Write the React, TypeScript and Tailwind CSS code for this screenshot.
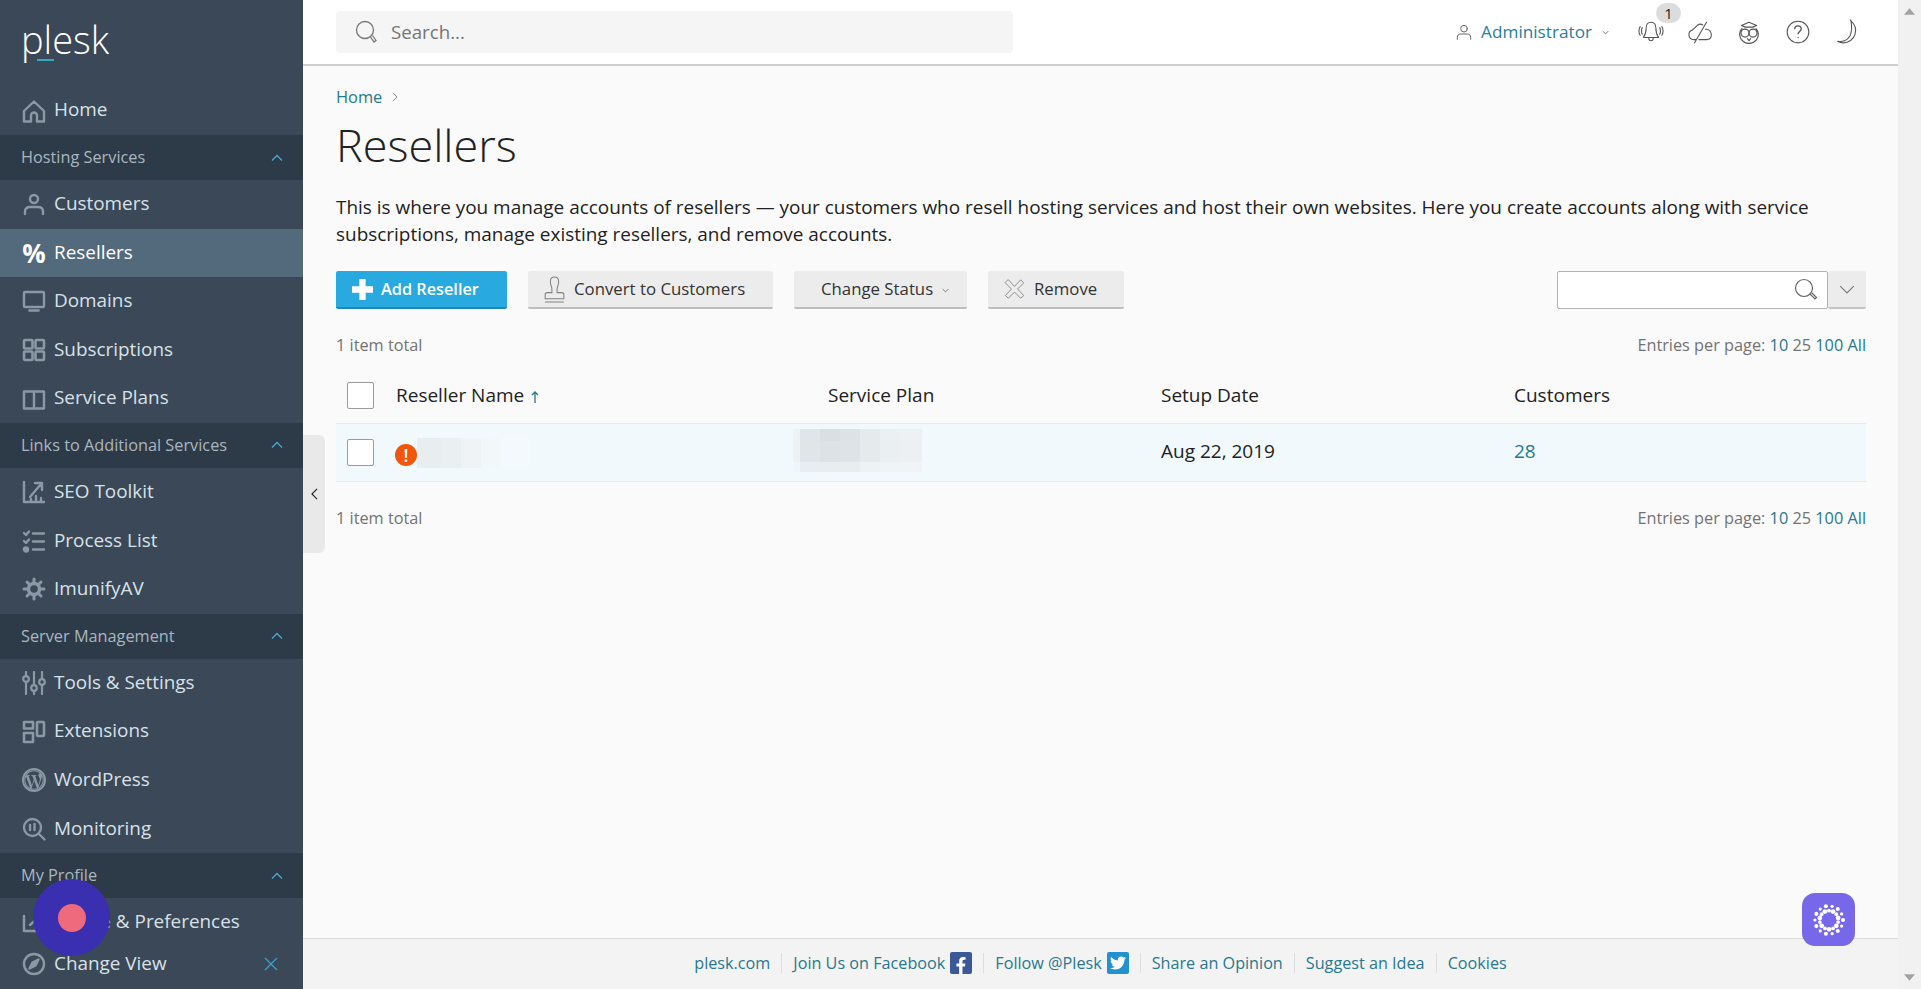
import { ReactNode } from "react";
import { FaWordpressSimple, FaFacebookF, FaTwitter } from "react-icons/fa";

const font = "font-['Open_Sans',sans-serif]";

function Ico({ children, cls = "w-[24px] h-[24px] text-[#8b98a5]", sw = 1.6 }: { children: ReactNode; cls?: string; sw?: number }) {
  return (
    <svg viewBox="0 0 24 24" fill="none" stroke="currentColor" strokeWidth={sw} strokeLinecap="round" strokeLinejoin="round" className={`${cls} shrink-0`}>
      {children}
    </svg>
  );
}

// sidebar icons
const HomeIcon = () => (
  <Ico sw={2.4}>
    <path d="M2 12 12 2.500 22 12v10.500H15v-6a3 3 0 0 0-6 0v6H2z" />
  </Ico>
);
const UserIcon = () => (
  <Ico sw={2.4}>
    <circle cx="12" cy="7" r="4" />
    <path d="M3 22v-2.500c0-3 2-4.500 5-4.500h8c3 0 5 1.500 5 4.500V22" />
  </Ico>
);
const MonitorIcon = () => (
  <Ico sw={2.4}>
    <rect x="2" y="3" width="20" height="15" rx="1" />
    <path d="M7.500 21.500h9" strokeWidth="2.500" />
  </Ico>
);
const GridIcon = () => (
  <Ico sw={2.6}>
    <rect x="2" y="2" width="8.500" height="8.500" rx="1" />
    <rect x="13.500" y="2" width="8.500" height="8.500" rx="1" />
    <rect x="2" y="13.500" width="8.500" height="8.500" rx="1" />
    <rect x="13.500" y="13.500" width="8.500" height="8.500" rx="1" />
  </Ico>
);
const BookIcon = () => (
  <Ico sw={2.4}>
    <path d="M12 4.500H2v17h10zM12 4.500h10v17H12z" />
  </Ico>
);
const SeoIcon = () => (
  <Ico sw={2.4}>
    <path d="M2 2v20h20M8 17l11-13M13 3h7v7M9 22v-3M14 22v-6M19 22v-4" />
  </Ico>
);
const ProcessIcon = () => (
  <Ico sw={2.4}>
    <path d="m2 4 2 2 3-3.500M2 12l2 2 3-3.500M11 4.500h11M11 12.500h11M11 20.500h11" />
    <circle cx="4" cy="20.500" r="2" fill="currentColor" />
  </Ico>
);
const GearIcon = () => (
  <Ico sw={2}>
    <circle cx="12" cy="12" r="5.500" strokeWidth="3.500" />
    <path d="M12 2v3M12 19v3M2 12h3M19 12h3M5 5l2 2M17 17l2 2M5 19l2-2M17 7l2-2" strokeWidth="3" />
  </Ico>
);
const SlidersIcon = () => (
  <Ico sw={2.2}>
    <path d="M4 1v4M4 11v12M12 1v13M12 20v3M20 1v7M20 14v9" />
    <circle cx="4" cy="8" r="2.800" />
    <circle cx="12" cy="17" r="2.800" />
    <circle cx="20" cy="11" r="2.800" />
  </Ico>
);
const ExtIcon = () => (
  <Ico sw={2.6}>
    <rect x="2" y="2" width="9" height="6.500" />
    <rect x="2" y="13" width="9" height="9" />
    <rect x="15" y="2" width="7" height="14" rx="1" />
  </Ico>
);
const MonitoringIcon = () => (
  <Ico sw={2.4}>
    <circle cx="10.500" cy="10.500" r="8.500" />
    <path d="m17 17 5.500 5.500M8 8v5M12.500 7v6" strokeWidth="2.400" />
  </Ico>
);
const ProfileIcon = () => (
  <Ico sw={2.4}>
    <path d="M2 6v15h16M8 15l13-12" />
  </Ico>
);
const CompassIcon = () => (
  <Ico sw={2.4}>
    <circle cx="12" cy="12" r="10" />
    <path d="m16.500 7.500-6 3-3 6 6-3z" fill="currentColor" />
  </Ico>
);
const WpIcon = () => (
  <span className="relative w-[24px] h-[24px] shrink-0 rounded-full border-2 border-[#8b98a5] flex items-center justify-center text-[#8b98a5]">
    <FaWordpressSimple className="w-[24px] h-[24px]" />
  </span>
);

function NavItem({ label, icon, active, h = "h-[48.600px]" }: { label: string; icon: ReactNode; active?: boolean; h?: string }) {
  return (
    <div className={`${h} flex items-center pl-[22px] gap-[8px] text-[18.900px] shrink-0 ${active ? "bg-[#536a7d] text-white" : "text-[#d9e1e8]"}`}>
      {icon}
      <span className="-mt-[2px]">{label}</span>
    </div>
  );
}

function SectionRow({ label }: { label: string }) {
  return (
    <div className="h-[45px] shrink-0 bg-[#2d3a47] flex items-center justify-between pl-[21px] pr-[20px] text-[#aab6c0] text-[16.300px]">
      <span className="-mt-[1px]">{label}</span>
      <svg viewBox="0 0 12 8" fill="none" stroke="#4ba8cf" strokeWidth="1.300" className="w-[12px] h-[8px]">
        <path d="m1 6.500 5-5 5 5" />
      </svg>
    </div>
  );
}

function Sidebar() {
  return (
    <aside className="w-[303px] shrink-0 h-full bg-[#3a4857] flex flex-col overflow-hidden relative">
      <div className="h-[86px] shrink-0 pl-[21px] pt-[9px] relative">
        <span className="text-white text-[38px] font-light leading-[60px]">plesk</span>
        <span className="absolute left-[37px] top-[59px] w-[17px] h-[2px] bg-[#3ba6c4]" />
      </div>
      <NavItem label="Home" icon={<HomeIcon />} h="h-[49px]" />
      <SectionRow label="Hosting Services" />
      <NavItem label="Customers" icon={<UserIcon />} />
      <NavItem label="Resellers" active icon={<span className="w-[24px] text-center text-white text-[26px] font-bold leading-none">%</span>} />
      <NavItem label="Domains" icon={<MonitorIcon />} />
      <NavItem label="Subscriptions" icon={<GridIcon />} />
      <NavItem label="Service Plans" icon={<BookIcon />} />
      <SectionRow label="Links to Additional Services" />
      <NavItem label="SEO Toolkit" icon={<SeoIcon />} />
      <NavItem label="Process List" icon={<ProcessIcon />} />
      <NavItem label="ImunifyAV" icon={<GearIcon />} />
      <SectionRow label="Server Management" />
      <NavItem label="Tools & Settings" icon={<SlidersIcon />} />
      <NavItem label="Extensions" icon={<ExtIcon />} />
      <NavItem label="WordPress" icon={<WpIcon />} />
      <NavItem label="Monitoring" icon={<MonitoringIcon />} />
      <SectionRow label="My Profile" />
      <NavItem label="Profile & Preferences" icon={<ProfileIcon />} />
      <div className="flex items-center justify-between pr-[25px]">
        <NavItem label="Change View" icon={<CompassIcon />} h="h-[34px]" />
        <svg viewBox="0 0 14 14" stroke="#3f9fd0" strokeWidth="1.300" className="w-[14px] h-[14px]">
          <path d="m1 1 12 12M13 1 1 13" />
        </svg>
      </div>
    </aside>
  );
}

function Header() {
  const c = "w-[26px] h-[26px] text-[#555]";
  return (
    <header className="h-[66px] shrink-0 bg-white border-b-2 border-[#cfcfcf] flex items-center justify-between pl-[33px] pr-[27px]">
      <div className="w-[677px] h-[42px] bg-[#f5f5f5] rounded-[4px] flex items-center pl-[19px] gap-[12px] text-[#757575] text-[18.700px]">
        <svg viewBox="0 0 24 24" fill="none" stroke="#777" strokeWidth="1.300" className="w-[24px] h-[26px]">
          <circle cx="10" cy="10" r="8.500" />
          <path d="m15.500 17 3.500 5 2-1.500-3.500-5" />
        </svg>
        <span className="mt-[1px]">Search...</span>
      </div>
      <div className="flex items-center">
        <Ico cls="w-[16px] h-[20px] text-[#666] mr-[9px]" sw={1.500}>
          <circle cx="12" cy="7" r="5" />
          <path d="M2 23v-3c0-3 2-5 5-5h10c3 0 5 2 5 5v3" />
        </Ico>
        <span className="text-[#28809a] text-[17.200px] font-medium">Administrator</span>
        <svg viewBox="0 0 10 6" fill="none" stroke="#666" strokeWidth="1.200" className="w-[7px] h-[5px] ml-[10px] mr-[17px]">
          <path d="m1 1 4 4 4-4" />
        </svg>
        <div className="w-[49px] flex justify-center relative">
          <Ico cls={c} sw={1}>
            <path d="M12 3c-3 0-4.500 2.500-4.500 5.500 0 4-1 6.500-2.500 8.500h14c-1.500-2-2.500-4.500-2.500-8.500C16.500 5.500 15 3 12 3ZM10 17v1a2 2 0 0 0 4 0v-1M4 8c-1 1.500-1 4.500 0 6M2 7c-1.500 2-1.500 6 0 8M20 8c1 1.500 1 4.500 0 6M22 7c1.500 2 1.500 6 0 8" />
          </Ico>
          <span className="absolute left-[30px] -top-[16px] w-[25px] h-[20px] rounded-full bg-[#dcdcdc] text-[#222] text-[15px] leading-[20px] text-center">1</span>
        </div>
        <div className="w-[49px] flex justify-center">
          <Ico cls={c} sw={1}>
            <path d="M8 19H6a4.500 4.500 0 0 1-1-8.800l5-4.700c1.500-1 3-1 4.500 0M17 9.500c3-.5 5.500 2 5.500 5s-2 4.500-4.500 4.500h-7M18 3 7 22" />
          </Ico>
        </div>
        <div className="w-[49px] flex justify-center">
          <Ico cls={c} sw={1.100}>
            <path d="M5 6 12 3l7 3-3.500 1.500h-7zM5.500 9C3 12 3 16 5 19c2 2.500 4.500 3.500 7 3.500s5-1 7-3.500c2-3 2-7-.5-10" />
            <circle cx="8.300" cy="13" r="3.700" />
            <circle cx="15.700" cy="13" r="3.700" />
            <path d="m10.500 18 1.500 2 1.500-2" />
          </Ico>
        </div>
        <div className="w-[49px] flex justify-center">
          <svg viewBox="0 0 24 24" className={c} fill="none" stroke="currentColor" strokeWidth="1">
            <circle cx="12" cy="12" r="10" />
            <path d="M9 9.500c0-4 6-4 6-.5 0 2.500-3 2.500-3 5M12 16.500v1" strokeWidth="1.200" />
          </svg>
        </div>
        <div className="w-[49px] flex justify-center">
          <Ico cls={c} sw={1}>
            <path d="M15 1c4 3.500 6 8 4.500 13-1.500 5-6 8-11 8-2 0-3.500-.5-5-1.500 5.500 1 9.500-1.500 11.500-5.500 1.500-4 1.500-9.500 .5-14Z" />
          </Ico>
        </div>
      </div>
    </header>
  );
}

function ToolButton({ children, w }: { children: ReactNode; w: string }) {
  return (
    <div className={`${w} h-[38px] shrink-0 bg-[#ececec] border-b-2 border-[#bdbdbd] rounded-[2px] flex items-center text-[#333] text-[16.800px]`}>
      {children}
    </div>
  );
}

function Toolbar() {
  return (
    <div className="flex mt-[23px] items-start">
      <div className="w-[171px] h-[38px] shrink-0 bg-[#28a9e0] border-b-2 border-[#1e88b8] rounded-[2px] flex items-center pl-[16px] gap-[8px] text-white text-[16.300px] font-semibold">
        <svg viewBox="0 0 20 20" fill="white" className="w-[21px] h-[21px]">
          <path d="M7 0h6v7h7v6h-7v7H7v-7H0V7h7z" />
        </svg>
        <span>Add Reseller</span>
      </div>
      <div className="ml-[21px]">
        <ToolButton w="w-[245px]">
          <span className="pl-[16px] pr-[9px]">
            <svg viewBox="0 0 20 26" fill="none" stroke="#808080" strokeWidth="1" className="w-[21px] h-[27px]">
              <path d="M10 1C7.500 1 6 3 6 5.500c0 3 1.500 4.500 1.500 7.500v3H3c-1.500 0-2 1-2 2v4h18v-4c0-1-.5-2-2-2h-4.500v-3c0-3 1.500-4.500 1.500-7.500C14 3 12.500 1 10 1ZM1 25h18" />
            </svg>
          </span>
          <span>Convert to Customers</span>
        </ToolButton>
      </div>
      <div className="ml-[21px]">
        <ToolButton w="w-[173px]">
          <span className="pl-[27px]">Change Status</span>
          <svg viewBox="0 0 10 6" fill="none" stroke="#666" strokeWidth="1.200" className="w-[7px] h-[5px] ml-[9px] mt-[3px]">
            <path d="m1 1 4 4 4-4" />
          </svg>
        </ToolButton>
      </div>
      <div className="ml-[21px]">
        <ToolButton w="w-[136px]">
          <span className="pl-[16px] pr-[9px]">
            <Ico cls="w-[21px] h-[24px] text-[#808080]" sw={1}>
              <path d="M5 1.500 12 9l7-7.500 3.500 3.500L15.500 12l7 7.500-3.500 3-7-7-7 7-3.500-3 7-7.500-7-7z" />
            </Ico>
          </span>
          <span>Remove</span>
        </ToolButton>
      </div>
      <div className="ml-auto flex">
        <div className="w-[271px] h-[38px] bg-white border border-[#b3b3b3] rounded-[2px] flex items-center justify-end pr-[9px]">
          <svg viewBox="0 0 24 24" fill="none" stroke="#666" strokeWidth="1.200" className="w-[24px] h-[24px]">
            <circle cx="10" cy="10" r="8.500" />
            <path d="m16 16 5 5 1.500-1.500-5-5" />
          </svg>
        </div>
        <div className="w-[38px] h-[38px] bg-[#ececec] border-b-2 border-[#c4c4c4] rounded-[2px] flex items-center justify-center">
          <svg viewBox="0 0 14 8" fill="none" stroke="#777" strokeWidth="1" className="w-[16px] h-[9px]">
            <path d="m1 1 6 6 6-6" />
          </svg>
        </div>
      </div>
    </div>
  );
}

function TotalRow({ mt }: { mt: string }) {
  return (
    <div className={`${mt} h-[24px] pb-[2px] flex items-center justify-between text-[16.300px] text-[#737373]`}>
      <span>1 item total</span>
      <span>
        Entries per page: <span className="text-[#28788e]">10</span> <span className="text-[#737373]">25</span>{" "}
        <span className="text-[#28788e]">100</span> <span className="text-[#28788e]">All</span>
      </span>
    </div>
  );
}

const Check = () => <div className="w-[27px] h-[27px] bg-white border border-[#9c9c9c] rounded-[2px]" />;

const nameBlocks = ["w-[24px] bg-[#e8edef]", "w-[20px] bg-[#eaeff1]", "w-[20px] bg-[#eff3f5]", "w-[20px] bg-[#f2f7f9]", "w-[29px] bg-[#f3f9fc]"];

const planRows = [
  ["h-[12px] w-[7px] bg-[#eef3f6]", "h-[12px] w-[20px] bg-[#dfe5e8]", "h-[12px] w-[20px] bg-[#d9dfe2]", "h-[12px] w-[20px] bg-[#dce2e5]", "h-[12px] w-[20px] bg-[#e5eaed]", "h-[12px] w-[20px] bg-[#ebf0f2]", "h-[12px] w-[22px] bg-[#edf1f3]"],
  ["h-[21px] w-[7px] bg-[#edf2f5]", "h-[21px] w-[20px] bg-[#e0e5e8]", "h-[21px] w-[20px] bg-[#dce2e5]", "h-[21px] w-[20px] bg-[#dde3e6]", "h-[21px] w-[20px] bg-[#e5eaed]", "h-[21px] w-[20px] bg-[#eaeff1]", "h-[21px] w-[22px] bg-[#ecf0f2]"],
  ["h-[10px] w-[7px] bg-[#f1f6f9]", "h-[10px] w-[20px] bg-[#e8ecf3]", "h-[10px] w-[20px] bg-[#e9edf0]", "h-[10px] w-[20px] bg-[#e9edf0]", "h-[10px] w-[20px] bg-[#eef2f5]", "h-[10px] w-[20px] bg-[#f0f4f6]", "h-[10px] w-[22px] bg-[#f0f4f6]"],
];

function Table() {
  const cols = "grid grid-cols-[60px_432px_333px_353px_1fr] items-center";
  return (
    <div className="mt-[9px] text-[19px] text-[#222]">
      <div className={`${cols} h-[57px] border-b border-[#e3e9ed]`}>
        <div className="pl-[11px]"><Check /></div>
        <div className="flex items-center gap-[7px]">
          Reseller Name
          <svg viewBox="0 0 8 12" fill="none" stroke="#28788e" strokeWidth="1.300" className="w-[8px] h-[12px] mt-[3px]">
            <path d="M4 12V1M1 4l3-3 3 3" />
          </svg>
        </div>
        <div>Service Plan</div>
        <div>Setup Date</div>
        <div>Customers</div>
      </div>
      <div className={`${cols} h-[58px] bg-[#f1f9fd] border-b border-[#e3e9ed]`}>
        <div className="pl-[11px]"><Check /></div>
        <div className="flex items-center -ml-[1px] mt-[5px]">
          <span className="w-[22px] h-[22px] rounded-full bg-[#f1560a] text-white text-[18px] font-semibold leading-[22px] text-center">!</span>
          <div className="flex h-[30px] -mt-[5px]">
            {nameBlocks.map((c) => (
              <div key={c} className={c} />
            ))}
          </div>
        </div>
        <div className="-ml-[35px] mt-[-4px]">
          {planRows.map((row, i) => (
            <div key={i} className="flex">
              {row.map((c) => (
                <div key={c} className={c} />
              ))}
            </div>
          ))}
        </div>
        <div className="-mt-[2px]">Aug 22, 2019</div>
        <div className="-mt-[2px] text-[#28788e]">28</div>
      </div>
    </div>
  );
}

function Footer() {
  const Sep = () => <span className="w-px h-[20px] bg-[#dddddd] mx-[11px]" />;
  return (
    <footer className="h-[51px] shrink-0 bg-[#f3f3f3] border-t border-[#dadada] flex items-center justify-center text-[16.200px] text-[#28788e] pb-[2px]">
      <span>plesk.com</span>
      <Sep />
      <span>Join Us on Facebook</span>
      <span className="w-[22px] h-[22px] ml-[5px] bg-[#3b5998] rounded-[2px] flex items-end justify-center text-white">
        <FaFacebookF className="w-[12px] h-[17px]" />
      </span>
      <Sep />
      <span>Follow @Plesk</span>
      <span className="w-[22px] h-[22px] ml-[5px] bg-[#2291d2] rounded-[2px] flex items-center justify-center text-white">
        <FaTwitter className="w-[16px] h-[16px]" />
      </span>
      <Sep />
      <span>Share an Opinion</span>
      <Sep />
      <span>Suggest an Idea</span>
      <Sep />
      <span>Cookies</span>
    </footer>
  );
}

function Scrollbar() {
  return (
    <div className="w-[23px] shrink-0 h-full bg-[#f1f1f1] flex flex-col justify-between items-center py-[8px]">
      <svg viewBox="0 0 10 6" fill="#a3a3a3" className="w-[11px] h-[7px]"><path d="M5 0 10 6H0z" /></svg>
      <svg viewBox="0 0 10 6" fill="#a3a3a3" className="w-[11px] h-[7px]"><path d="M5 6 0 0h10z" /></svg>
    </div>
  );
}

const dots: [number, number, number][] = [];
for (let i = 0; i < 14; i++) {
  const a = (i / 14) * Math.PI * 2;
  dots.push([20 + Math.cos(a) * 16.500, 20 + Math.sin(a) * 16.500, i % 2 ? 1.900 : 2.400]);
  const b = a + 0.22;
  dots.push([20 + Math.cos(b) * 11, 20 + Math.sin(b) * 11, i % 2 ? 2.800 : 2.200]);
}

export default function App() {
  return (
    <div className={`${font} relative w-full h-[989px] flex overflow-hidden bg-[#fafafa]`}>
      <Sidebar />
      <div className="flex-1 min-w-0 h-full flex flex-col relative">
        <Header />
        <main className="flex-1 px-[33px] pr-[32px] bg-[#fafafa]">
          <div className="pt-[21px] h-[41px] flex items-center gap-[10px] text-[16.400px] text-[#28788e]">
            <span>Home</span>
            <svg viewBox="0 0 6 10" fill="none" stroke="#888" strokeWidth="1" className="w-[6px] h-[10px]">
              <path d="m1 1 4 4-4 4" />
            </svg>
          </div>
          <h1 className="mt-[8px] h-[60px] leading-[60px] text-[45px] font-light text-[#222]">Resellers</h1>
          <p className="mt-[19px] text-[18.950px] leading-[27px] text-[#222]">
            This is where you manage accounts of resellers — your customers who resell hosting services and host their own websites. Here you create accounts along with service subscriptions, manage existing resellers, and remove accounts.
          </p>
          <Toolbar />
          <TotalRow mt="mt-[25px]" />
          <Table />
          <TotalRow mt="mt-[25px]" />
        </main>
        <Footer />
        <div className="absolute left-0 top-[435px] w-[22px] h-[118px] bg-[#e9e9e9] rounded-r-[6px] flex items-center justify-center">
          <svg viewBox="0 0 8 14" fill="none" stroke="#222" strokeWidth="1.300" className="w-[7px] h-[12px]">
            <path d="M7 1 1 7l6 6" />
          </svg>
        </div>
        <div className="absolute right-[43px] bottom-[43px] w-[53px] h-[53px] rounded-[13px] bg-[#7768ea] flex items-center justify-center">
          <svg viewBox="0 0 40 40" fill="white" className="w-[34px] h-[34px]">
            {dots.map(([x, y, r], i) => (
              <circle key={i} cx={x} cy={y} r={r} />
            ))}
          </svg>
        </div>
      </div>
      <Scrollbar />
      <div className="absolute left-[33px] top-[879px] w-[77px] h-[77px] rounded-full bg-[#3a2fb0] flex items-center justify-center">
        <div className="w-[28px] h-[28px] rounded-full bg-[#ee6a7c]" />
      </div>
    </div>
  );
}
